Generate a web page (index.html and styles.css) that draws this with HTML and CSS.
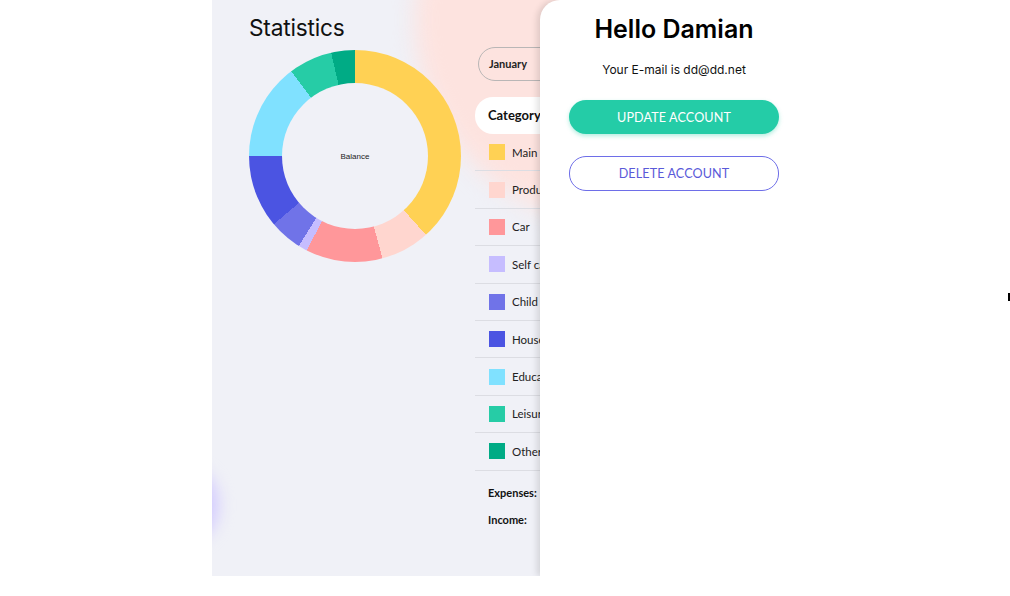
FILE: index.html
```html
<!DOCTYPE html>
<html lang="en">
<head>
<meta charset="utf-8">
<title>Statistics</title>
<link rel="stylesheet" href="styles.css">
</head>
<body>
<div class="stage">
  <section class="stats">
    <div class="blob blob-pink"></div>
    <div class="blob blob-purple"></div>
    <div class="chart-col">
      <h2 class="title">Statistics</h2>
      <div class="donut">
        <div class="hole"><span>Balance</span></div>
      </div>
    </div>
    <div class="table-col">
      <div class="select">January</div>
      <div class="thead">Category</div>
      <ul class="rows">
        <li class="row"><span class="sw c1"></span>Main expenses</li>
        <li class="row"><span class="sw c2"></span>Products</li>
        <li class="row"><span class="sw c3"></span>Car</li>
        <li class="row"><span class="sw c4"></span>Self care</li>
        <li class="row"><span class="sw c5"></span>Child care</li>
        <li class="row"><span class="sw c6"></span>Household products</li>
        <li class="row"><span class="sw c7"></span>Education</li>
        <li class="row"><span class="sw c8"></span>Leisure</li>
        <li class="row"><span class="sw c9"></span>Other expenses</li>
      </ul>
      <div class="totals">
        <p>Expenses:</p>
        <p>Income:</p>
      </div>
    </div>
  </section>
  <aside class="panel">
    <div class="panel-inner">
      <h1 class="hello">Hello Damian</h1>
      <p class="email">Your E-mail is dd@dd.net</p>
      <button class="btn btn-update">UPDATE ACCOUNT</button>
      <button class="btn btn-delete">DELETE ACCOUNT</button>
    </div>
  </aside>
</div>
<span class="caret"></span>
</body>
</html>
```

FILE: styles.css
```css
* { box-sizing: border-box; }
html, body { margin: 0; padding: 0; background: #ffffff; }
body { width: 1010px; height: 596px; overflow: hidden; position: relative; font-family: "Lato", "Liberation Sans", sans-serif; }

.stage { position: relative; margin-left: 212px; width: 798px; height: 576px; }

.stats {
  position: relative;
  width: 520px;
  height: 576px;
  background: #f0f1f7;
  overflow: hidden;
  display: flex;
  gap: 14px;
  padding: 14px 0 0 37px;
}

.blob { position: absolute; border-radius: 50%; }
.blob-pink {
  width: 410px; height: 410px;
  left: 203px; top: -185px;
  background: #fde3df;
  filter: blur(11px);
}
.blob-purple {
  width: 50px; height: 70px;
  left: -44px; top: 470px;
  background: #d2caff;
  filter: blur(8px);
}

.chart-col { position: relative; width: 212px; display: flex; flex-direction: column; }
.title {
  margin: 0;
  font-family: "Inter", "Noto Sans", sans-serif;
  font-weight: 400;
  font-size: 22.7px;
  line-height: 28px;
  color: #111;
  letter-spacing: -0.2px;
}
.donut {
  margin-top: 8px;
  width: 212px; height: 212px;
  border-radius: 50%;
  background: conic-gradient(
    #ffd154 0deg 138deg,
    #ffd6cf 138deg 165deg,
    #ff979a 165deg 207deg,
    #c6bdff 207deg 212deg,
    #7073e8 212deg 230deg,
    #4b54e2 230deg 270deg,
    #80e1ff 270deg 323deg,
    #26cca6 323deg 347deg,
    #00ab85 347deg 360deg);
  display: flex; align-items: center; justify-content: center;
}
.hole {
  width: 146px; height: 146px; border-radius: 50%;
  background: #f0f1f7;
  display: flex; align-items: center; justify-content: center;
}
.hole span { font-family: "Liberation Sans", Arial, sans-serif; font-size: 8px; color: #222; }

.table-col { position: relative; width: 240px; display: flex; flex-direction: column; }
.select {
  margin-top: 33px; margin-left: 3px;
  height: 34px; width: 200px;
  border: 1px solid #b9b6b6;
  border-radius: 17px;
  padding-left: 10px;
  font-size: 11px; font-weight: 700; color: #222;
  line-height: 32px;
}
.thead {
  margin-top: 16px;
  height: 37px;
  background: #fff;
  border-radius: 18px;
  padding-left: 13px;
  font-size: 13px; font-weight: 700; color: #111;
  line-height: 37px;
}
.rows { list-style: none; margin: 0; padding: 0; }
.row {
  height: 37.4px;
  border-bottom: 1px solid #dcdde3;
  display: flex; align-items: center;
  gap: 7px;
  padding-left: 14px;
  font-size: 11.5px; color: #222;
  white-space: nowrap;
}
.sw { width: 16px; height: 16px; flex: none; }
.c1 { background: #ffd154; }
.c2 { background: #ffd6cf; }
.c3 { background: #ff979a; }
.c4 { background: #c6bdff; }
.c5 { background: #7073e8; }
.c6 { background: #4b54e2; }
.c7 { background: #80e1ff; }
.c8 { background: #26cca6; }
.c9 { background: #00ab85; }

.totals { padding: 8px 0 0 13px; }
.totals p { margin: 0; font-size: 11px; font-weight: 700; line-height: 27px; color: #111; }

.panel {
  position: absolute;
  left: 328px; top: 0; right: 0; bottom: 0;
  background: #fff;
  border-radius: 20px 0 0 0;
  box-shadow: -3px 0 6px rgba(0, 0, 0, 0.12);
  clip-path: inset(0 0 0 -20px);
}
.panel-inner {
  width: 268px;
  padding: 14px 29px 0;
  display: flex; flex-direction: column; align-items: center;
}
.hello {
  margin: 0;
  font-family: "Inter", "Noto Sans", sans-serif;
  font-weight: 600;
  font-size: 25px;
  line-height: 30px;
  color: #000;
}
.email {
  margin: 18px 0 0;
  font-family: "Inter", "Noto Sans", sans-serif;
  font-size: 12px;
  line-height: 16px;
  color: #111;
}
.btn {
  width: 210px;
  font-family: "Lato", "Liberation Sans", sans-serif;
  font-size: 12.6px;
  letter-spacing: 0.1px;
  border-radius: 17px;
  cursor: pointer;
}
.btn-update {
  margin-top: 22px;
  height: 34px;
  background: #24cca7;
  color: #fff;
  border: none;
  box-shadow: 0 2px 4px rgba(36, 204, 167, 0.35);
}
.btn-delete {
  margin-top: 22px;
  height: 35px;
  background: #fff;
  color: #5a5ad9;
  border: 1px solid #6e6ee8;
}

.caret { position: absolute; left: 1008px; top: 293px; width: 2px; height: 8px; background: #000; }
```
